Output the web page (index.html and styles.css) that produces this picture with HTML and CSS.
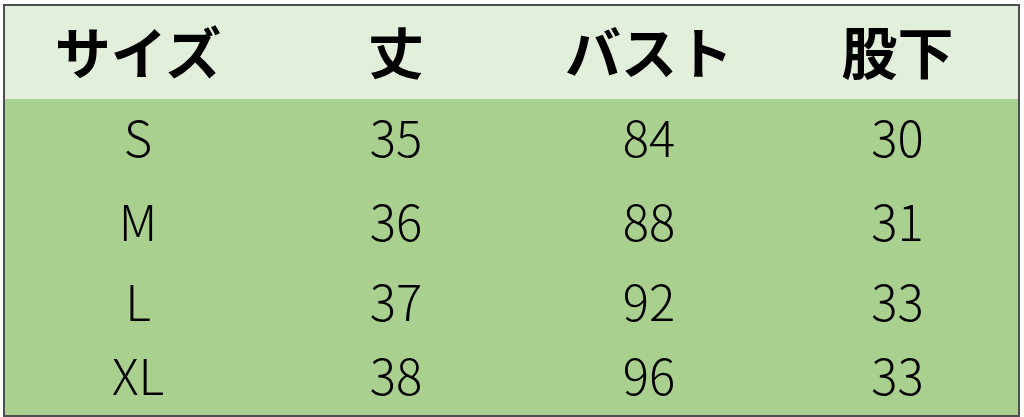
FILE: index.html
```html
<!DOCTYPE html>
<html lang="ja">
<head>
<meta charset="utf-8">
<title>サイズ表</title>
<link rel="stylesheet" href="styles.css">
</head>
<body>
<div class="sheet">
  <div class="size-table">
    <div class="row head">
      <div class="cell">サイズ</div>
      <div class="cell">丈</div>
      <div class="cell">バスト</div>
      <div class="cell">股下</div>
    </div>
    <div class="row body r1">
      <div class="cell">S</div>
      <div class="cell">35</div>
      <div class="cell">84</div>
      <div class="cell">30</div>
    </div>
    <div class="row body r2">
      <div class="cell">M</div>
      <div class="cell">36</div>
      <div class="cell">88</div>
      <div class="cell">31</div>
    </div>
    <div class="row body r3">
      <div class="cell">L</div>
      <div class="cell">37</div>
      <div class="cell">92</div>
      <div class="cell">33</div>
    </div>
    <div class="row body r4">
      <div class="cell">XL</div>
      <div class="cell">38</div>
      <div class="cell">96</div>
      <div class="cell">33</div>
    </div>
  </div>
</div>
</body>
</html>
```

FILE: styles.css
```css
html, body {
  margin: 0;
  padding: 0;
  background: #ffffff;
}

.sheet {
  width: 1024px;
  height: 417px;
  padding: 4px 0 0 3px;
  box-sizing: border-box;
}

.size-table {
  width: 1017px;
  border: 2px solid #4f4f4f;
  border-bottom-width: 3px;
  box-sizing: border-box;
  display: flex;
  flex-direction: column;
  font-family: "Noto Sans CJK JP", "Noto Sans", sans-serif;
  color: #000;
}

.row {
  display: grid;
  grid-template-columns: 266px 250px 256px 1fr;
  align-items: center;
}

.cell {
  text-align: center;
  line-height: 1;
}

.head {
  height: 93px;
  background: #e2efda;
  font-weight: 700;
  font-size: 56px;
}

.head .cell {
  padding-bottom: 5px;
}

.body {
  background: #a9d08e;
  font-weight: 300;
  font-size: 49px;
}

.body .cell {
  padding-bottom: 12px;
}

.r1 { height: 85px; }
.r2 { height: 82px; }
.r3 { height: 78px; }
.r4 { height: 71px; }
```
